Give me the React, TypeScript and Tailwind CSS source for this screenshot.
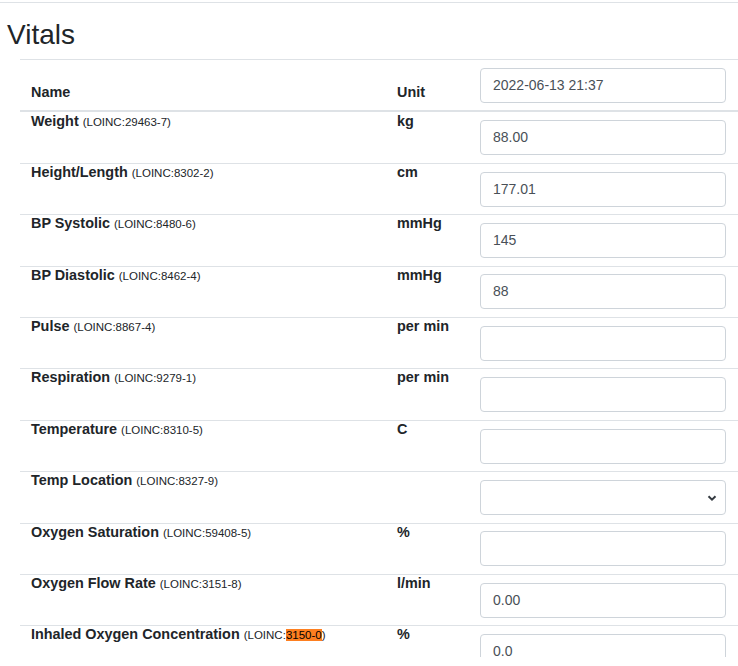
import React from "react";

const ROWS = [
  { name: "Weight", code: "29463-7", unit: "kg", value: "88.00" },
  { name: "Height/Length", code: "8302-2", unit: "cm", value: "177.01" },
  { name: "BP Systolic", code: "8480-6", unit: "mmHg", value: "145" },
  { name: "BP Diastolic", code: "8462-4", unit: "mmHg", value: "88" },
  { name: "Pulse", code: "8867-4", unit: "per min", value: "" },
  { name: "Respiration", code: "9279-1", unit: "per min", value: "" },
  { name: "Temperature", code: "8310-5", unit: "C", value: "" },
  { name: "Temp Location", code: "8327-9", unit: "", value: "", select: true },
  { name: "Oxygen Saturation", code: "59408-5", unit: "%", value: "" },
  { name: "Oxygen Flow Rate", code: "3151-8", unit: "l/min", value: "0.00" },
  { name: "Inhaled Oxygen Concentration", code: "3150-0", unit: "%", value: "0.0", mark: true },
];

function Field({ value, select }: { value: string; select?: boolean }) {
  return (
    <div className="relative flex h-[35px] items-center rounded-[4px] border border-[#ced4da] bg-white px-3 text-[14px] text-[#495057]">
      {value}
      {select && (
        <svg
          className="absolute right-[8px] top-[13px]"
          width="10"
          height="8"
          viewBox="0 0 10 8"
        >
          <path d="M1.5 2.2 L5 5.6 L8.5 2.2" fill="none" stroke="#343a40" strokeWidth="2" />
        </svg>
      )}
    </div>
  );
}

export default function App() {
  return (
    <div
      className="h-[657px] overflow-hidden bg-white text-[#212529]"
      style={{ fontFamily: '"Liberation Sans", Arial, sans-serif' }}
    >
      <div className="h-[2px]" />
      <div className="border-t border-[#dee2e6]" />

      {/* ── Heading ── */}
      <h3 className="mt-[15px] pl-[7px] text-[28px] font-normal leading-[1.2]">Vitals</h3>

      {/* ── Table ── */}
      <div className="ml-[20px] mt-[7px] border-t border-[#dee2e6]">
        <div className="grid grid-cols-[365px_83px_270px] border-b-2 border-[#dee2e6]">
          <div className="flex items-end px-[11px] pb-[7px] text-[14.4px] font-bold leading-[21px]">Name</div>
          <div className="flex items-end px-3 pb-[7px] text-[14.4px] font-bold leading-[21px]">Unit</div>
          <div className="px-3 pb-[7px] pt-[8px]">
            <Field value="2022-06-13 21:37" />
          </div>
        </div>

        {ROWS.map((r, i) => (
          <div
            key={r.name}
            className={`grid grid-cols-[365px_83px_270px] ${i > 0 ? "border-t border-[#dee2e6]" : "pt-[1px]"}`}
          >
            <div className="px-[11px] text-[14.4px] leading-[16px]">
              <span className="font-bold">{r.name}</span>{" "}
              <span className="text-[11.5px]">
                (LOINC:
                {r.mark ? <span className="bg-[#fd7f20] text-black">{r.code}</span> : r.code})
              </span>
            </div>
            <div className="px-3 text-[14.4px] font-bold leading-[16px]">{r.unit}</div>
            <div className="px-3 py-[7.7px]">
              <Field value={r.value} select={r.select} />
            </div>
          </div>
        ))}
      </div>
    </div>
  );
}
